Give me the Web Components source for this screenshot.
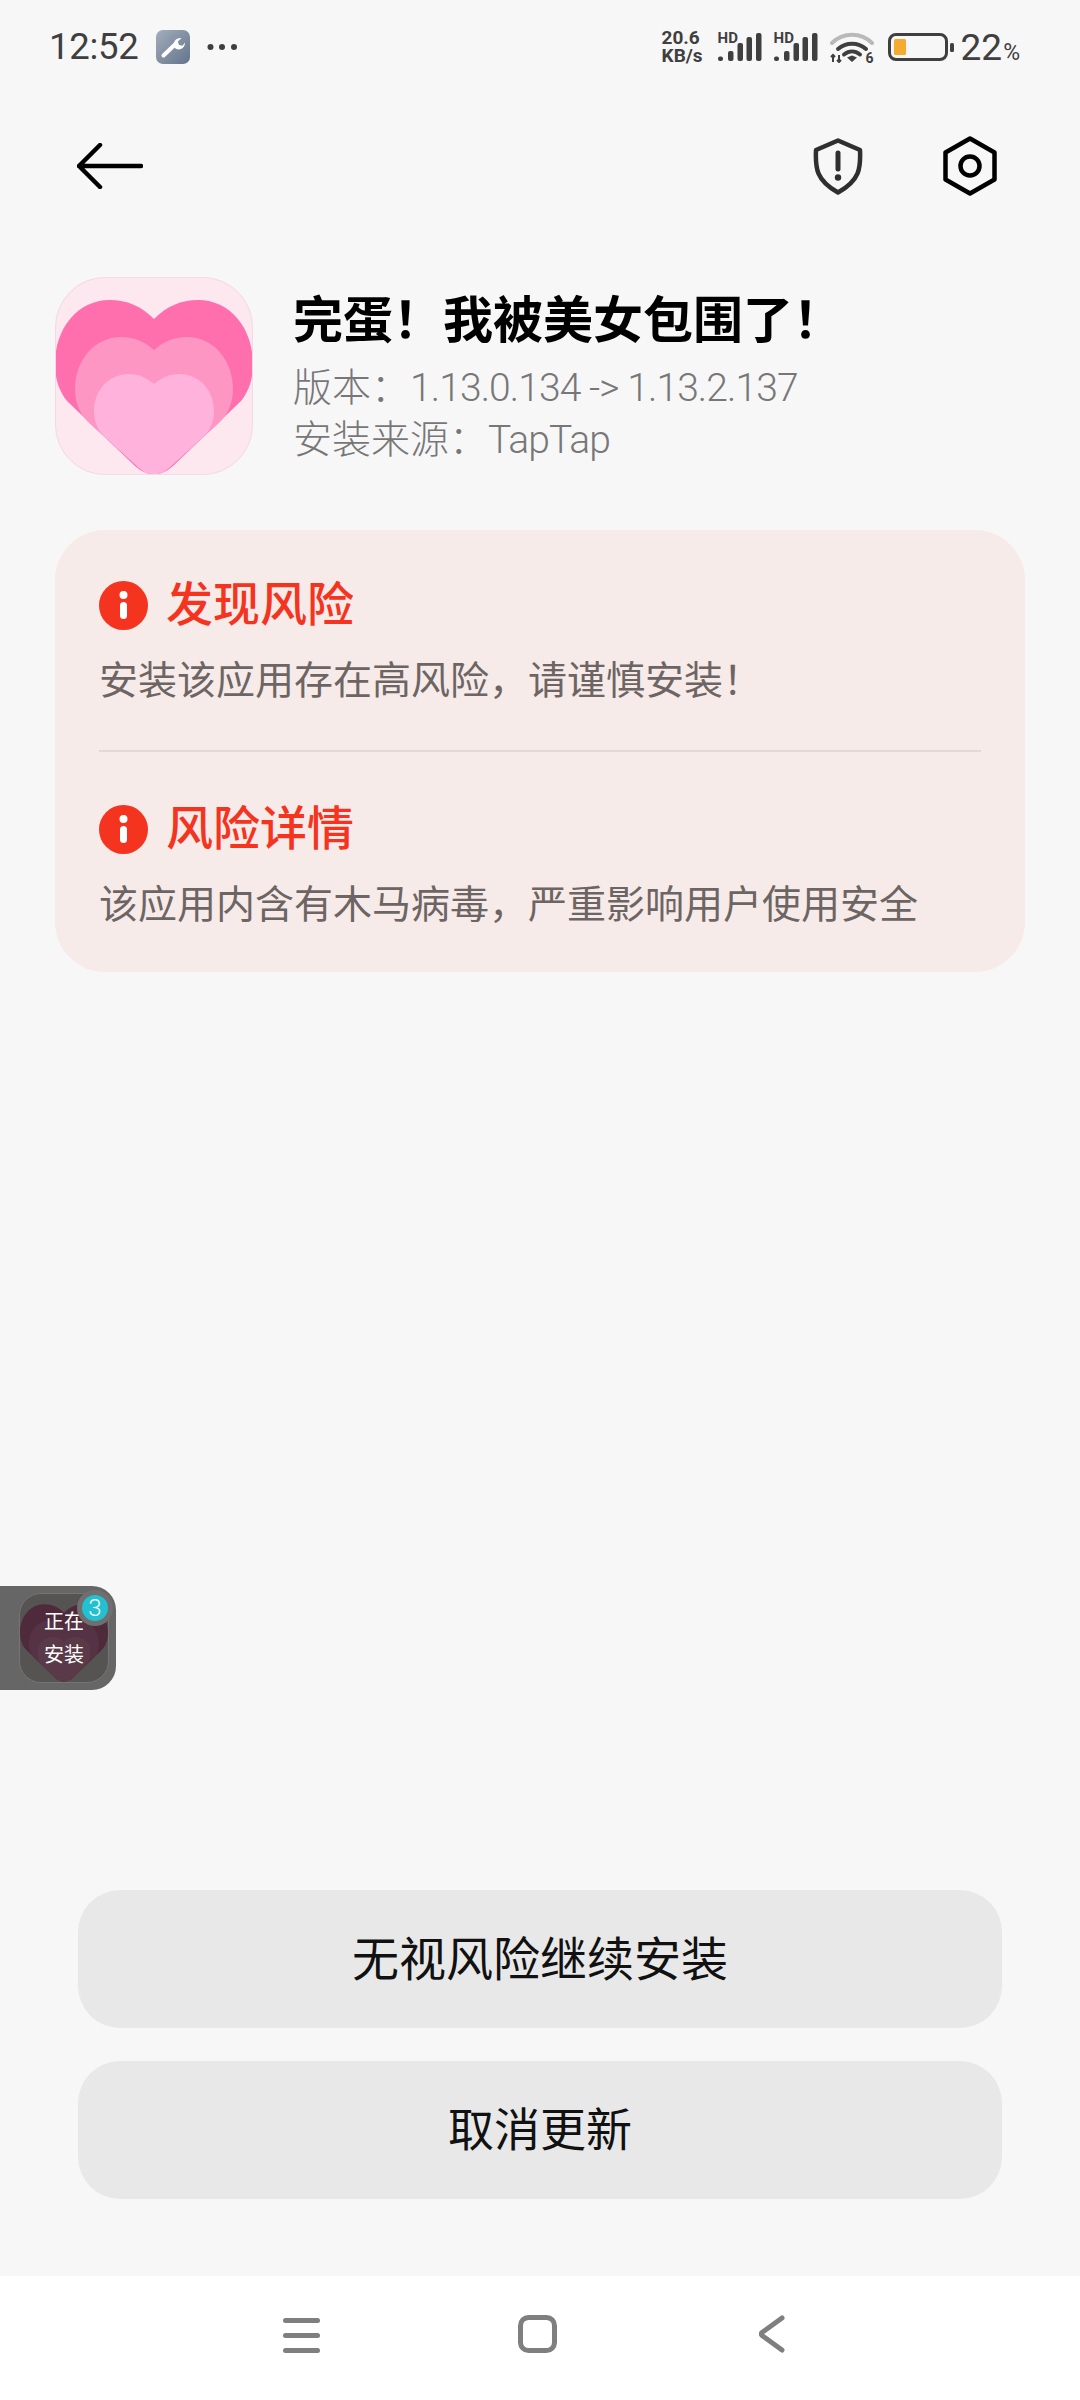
<!DOCTYPE html>
<html lang="zh"><head><meta charset="utf-8"><title>安装</title>
<style>html,body{margin:0;background:#f7f7f7}</style></head><body>
<app-screen>
  <status-bar></status-bar>
  <top-bar></top-bar>
  <app-header name="完蛋！我被美女包围了！" version-label="版本：" version="1.13.0.134 -> 1.13.2.137" source-label="安装来源：" source="TapTap"></app-header>
  <risk-card>
    <risk-item heading="发现风险" body="安装该应用存在高风险，请谨慎安装！"></risk-item>
    <risk-item heading="风险详情" body="该应用内含有木马病毒，严重影响用户使用安全" divided></risk-item>
  </risk-card>
  <float-badge count="3"></float-badge>
  <action-bar>
    <action-button>无视风险继续安装</action-button>
    <action-button style="font-size:46px">取消更新</action-button>
  </action-bar>
  <nav-bar></nav-bar>
</app-screen>
<script>
const FONT='Roboto,"Noto Sans CJK SC",sans-serif';
function def(name,html){
  customElements.define(name,class extends HTMLElement{
    connectedCallback(){
      if(this.shadowRoot)return;
      const r=this.attachShadow({mode:'open'});
      r.innerHTML=typeof html==='function'?html(this):html;
    }
  });
}
const HEART_BIG="M99 42C86 29 72 23 55 23C22 23 0 52 0 87C0 102 4 114 12 124L80 189Q99 206 118 189L186 124C194 114 198 102 198 87C198 52 176 23 143 23C126 23 112 29 99 42Z";
const HEART_MID="M99 73C90 65 79 60 66 60C39 60 20 84 20 112C20 124 24 136 33 145L84 191Q99 204 114 191L165 145C174 136 178 124 178 112C178 84 159 60 132 60C119 60 108 65 99 73Z";
const HEART_SM="M99 107C92 101 84 97 74 97C53 97 39 114 39 134C39 145 43 154 51 161L84 191Q99 204 114 191L147 161C155 154 159 145 159 134C159 114 145 97 124 97C114 97 106 101 99 107Z";
const SIGNAL=`<span class="sig"><span class="hd">HD</span><svg width="44" height="28" viewBox="0 0 44 28" fill="#3f3f3f"><rect x="0" y="23.500" width="5" height="4.500" rx="2"/><rect x="10" y="18" width="5.500" height="10" rx="2"/><rect x="19.500" y="10" width="5.500" height="18" rx="2"/><rect x="28.500" y="4" width="5.500" height="24" rx="2"/><rect x="38" y="0" width="5.500" height="28" rx="2"/></svg></span>`;

def('app-screen',`<style>:host{display:flex;flex-direction:column;width:1080px;height:2400px;position:relative;overflow:hidden;background:#f7f7f7;font-family:${FONT}}</style><slot></slot>`);

def('status-bar',`<style>
:host{display:flex;align-items:center;height:94px;padding:0 60px 0 49px;box-sizing:border-box;color:#3f3f3f;flex:none}
.t{font-size:36.500px;line-height:1;letter-spacing:-.3px;width:107px}
.w{width:34px;height:34px;display:block}
.d{margin-left:17px;display:block}
.sp{flex:1}
.rate{font:700 19px/18px Roboto,sans-serif;width:54px}
.sig{position:relative;width:44px;height:28px;margin-left:2px;display:block}
.sig+.sig{margin-left:12px}
.hd{position:absolute;left:0;top:-2px;font:700 15px/14px Roboto,sans-serif}
.sig svg{position:absolute;left:0;top:0}
.wf{position:relative;display:block;width:44px;height:32px;margin-left:12px}
.wf svg{display:block}
.six{position:absolute;right:0;bottom:-2px;font:700 14px/14px Roboto,sans-serif}
.bat{margin-left:14px;display:block}
.pct{font-size:37px;line-height:1;margin-left:7px;white-space:nowrap}
.pc{font-size:23px;margin-left:1px}
</style>
<span class="t">12:52</span>
<svg class="w" viewBox="0 0 34 34"><defs><linearGradient id="g" x1="0" y1="0" x2="1" y2="1"><stop offset="0" stop-color="#a3adbc"/><stop offset="1" stop-color="#64748b"/></linearGradient></defs><rect width="34" height="34" rx="7" fill="url(#g)"/><path d="M7.500 25.500L19 14.500" stroke="#fff" stroke-width="4" stroke-linecap="round" fill="none"/><path d="M18 16.500C16.500 12 20 7.500 25.500 8L21.800 11.600L23 15L26.500 15.800L29 12.500C29 18 24 21 19.500 18.500Z" fill="#fff"/></svg>
<svg class="d" width="30" height="8" viewBox="0 0 30 8" fill="#3f3f3f"><circle cx="3.500" cy="4" r="3"/><circle cx="15" cy="4" r="3"/><circle cx="27" cy="4" r="3"/></svg>
<span class="sp"></span>
<span class="rate">20.6<br>KB/s</span>
${SIGNAL}${SIGNAL}
<span class="wf"><svg width="44" height="32" viewBox="0 0 44 32" fill="none"><path d="M2 12C13 1 31 1 42 12" stroke="#b9b9b9" stroke-width="4" stroke-linecap="round"/><path d="M8 18C16 11 28 11 36 18" stroke="#3f3f3f" stroke-width="4" stroke-linecap="round"/><path d="M14 23.500C19 19.500 25 19.500 30 23.500" stroke="#3f3f3f" stroke-width="4" stroke-linecap="round"/><path d="M17 26.500L22 24.500L27 26.500L22 31Z" fill="#3f3f3f"/><path d="M3 31V24M1 26L3 24L5 26M9 24V31M7 29L9 31L11 29" stroke="#3f3f3f" stroke-width="2"/></svg><span class="six">6</span></span>
<svg class="bat" width="66" height="28" viewBox="0 0 66 28" fill="none"><rect x="1.500" y="1.500" width="57" height="25" rx="6.500" stroke="#3f3f3f" stroke-width="3"/><rect x="6" y="6" width="12" height="16" rx="1.500" fill="#f4ab2f"/><rect x="62" y="10" width="4" height="9" rx="1.500" fill="#3f3f3f"/></svg>
<span class="pct">22<span class="pc">%</span></span>`);

def('top-bar',`<style>
:host{display:flex;align-items:center;height:74px;margin-top:35px;padding:0 83px 0 77px;flex:none}
.sp{flex:1}.s{display:block}.h{display:block;margin-left:80px}
</style>
<svg width="66" height="46" viewBox="0 0 66 46" fill="none" stroke="#000" stroke-width="4.500" stroke-linecap="round" stroke-linejoin="round"><path d="M64 23H2M23 2L2 23L23 44"/></svg>
<span class="sp"></span>
<svg class="s" width="50" height="57" viewBox="0 0 50 57" fill="none"><path d="M25 2.500L47 12C47.800 30 47 42 25 54.500C3 42 2.200 30 3 12Z" stroke="#2f2f2f" stroke-width="4.500" stroke-linejoin="round"/><path d="M25 15V31" stroke="#2f2f2f" stroke-width="5" stroke-linecap="round"/><circle cx="25" cy="39.500" r="3.200" fill="#2f2f2f"/></svg>
<svg class="h" width="54" height="60" viewBox="0 0 54 60" fill="none" stroke="#000" stroke-width="4.500" stroke-linejoin="round"><path d="M27 2.500L51.500 16.500V43.500L27 57.500L2.500 43.500V16.500Z"/><circle cx="27" cy="30" r="9.500"/></svg>`);

def('app-header',h=>`<style>
:host{display:flex;align-items:flex-start;margin:74px 0 0 55px;flex:none}
svg{display:block;flex:none}
.x{margin:9px 0 0 40px;display:flex;flex-direction:column}
.n{font-size:50px;font-weight:700;color:#000;line-height:70px;white-space:nowrap;margin-bottom:6px}
.l{font-size:39px;font-weight:300;color:#777;line-height:52px;white-space:nowrap}
.l span{letter-spacing:-.9px}
</style>
<svg width="198" height="198" viewBox="0 0 198 198"><defs><clipPath id="c"><rect width="198" height="198" rx="50"/></clipPath></defs><g clip-path="url(#c)"><rect width="198" height="198" fill="#fde8f0"/><path d="${HEART_BIG}" fill="#ff6fae"/><path d="${HEART_MID}" fill="#fd96c3"/><path d="${HEART_SM}" fill="#feb2dc"/></g><rect x=".5" y=".5" width="197" height="197" rx="50" fill="none" stroke="#f2dbe4"/></svg>
<div class="x"><div class="n">${h.getAttribute('name')}</div><div class="l">${h.getAttribute('version-label')}<span>${h.getAttribute('version').replace('>','&gt;')}</span></div><div class="l">${h.getAttribute('source-label')}<span>${h.getAttribute('source')}</span></div></div>`);

def('risk-card',`<style>:host{display:block;box-sizing:border-box;margin:55px 55px 0;width:970px;height:442px;background:#f6ebe9;border-radius:50px;padding:0 44px;flex:none}</style><slot></slot>`);

def('risk-item',h=>`<style>
:host{display:block;box-sizing:border-box;height:${h.hasAttribute('divided')?221:220}px;padding-top:${h.hasAttribute('divided')?47:45}px;${h.hasAttribute('divided')?'border-top:2px solid #e2d9d7;':''}}
.t{display:flex;align-items:center;gap:18px;height:60px}
svg{display:block;flex:none}
.h{font-size:47px;font-weight:500;color:#f5341f;line-height:60px;white-space:nowrap}
.b{font-size:39px;color:#6d6563;line-height:52px;margin-top:20px;white-space:nowrap}
</style>
<div class="t"><svg width="49" height="49" viewBox="0 0 49 49"><circle cx="24.500" cy="24.500" r="24.500" fill="#f5341f"/><circle cx="24.500" cy="14" r="4" fill="#fff"/><rect x="21" y="21" width="7" height="17" rx="3.500" fill="#fff"/></svg><span class="h">${h.getAttribute('heading')}</span></div>
<div class="b">${h.getAttribute('body')}</div>`);

def('float-badge',h=>`<style>
:host{position:absolute;left:0;top:1586px;width:116px;height:104px;background:#666;border-radius:0 24px 24px 0;box-sizing:border-box}
.i{position:absolute;left:19px;top:7px;width:90px;height:90px;border-radius:22px;background:#565353;border:1px solid #757373;box-sizing:border-box;overflow:hidden}
.i svg{position:absolute;left:0;top:0;display:block}
.x{position:absolute;left:0;right:0;top:12px;text-align:center;color:#fff;font-size:20px;line-height:33px}
.c{position:absolute;left:82px;top:9px;width:26px;height:26px;border-radius:50%;background:#22c1d2;box-shadow:0 0 0 5px #6f6f6f;color:#fff;font-size:24px;font-weight:300;line-height:26px;text-align:center}
</style>
<div class="i"><svg width="88" height="88" viewBox="0 0 198 198"><path d="${HEART_BIG}" fill="#4f2a3b"/><path d="${HEART_MID}" fill="#553244"/><path d="${HEART_SM}" fill="#5a3a49"/></svg><div class="x">正在<br>安装</div></div>
<div class="c">${h.getAttribute('count')}</div>`);

def('action-bar',`<style>:host{display:flex;flex-direction:column;gap:33px;margin-top:auto;padding:0 78px 77px;flex:none}</style><slot></slot>`);

def('action-button',`<style>:host{display:flex;align-items:center;justify-content:center;height:138px;background:#e8e8e8;border-radius:42px;color:#111;font-size:47px;line-height:1;white-space:nowrap}</style><slot></slot>`);

def('nav-bar',`<style>
:host{display:block;position:relative;height:124px;background:#fff;flex:none}
svg{position:absolute;display:block}
</style>
<svg style="left:283px;top:42px" width="37" height="35" viewBox="0 0 37 35" fill="#7f7f7f"><rect y="0" width="37" height="5" rx="2.500"/><rect y="15" width="37" height="5" rx="2.500"/><rect y="30" width="37" height="5" rx="2.500"/></svg>
<svg style="left:518px;top:39px" width="39" height="38" viewBox="0 0 39 38" fill="none" stroke="#7f7f7f" stroke-width="5"><rect x="2.500" y="2.500" width="34" height="33" rx="8"/></svg>
<svg style="left:759px;top:39px" width="26" height="38" viewBox="0 0 26 38" fill="none" stroke="#7f7f7f" stroke-width="5" stroke-linecap="round" stroke-linejoin="round"><path d="M23 3L3 17.500Q1.500 19 3 20.500L23 35"/></svg>`);
</script>
</body></html>
